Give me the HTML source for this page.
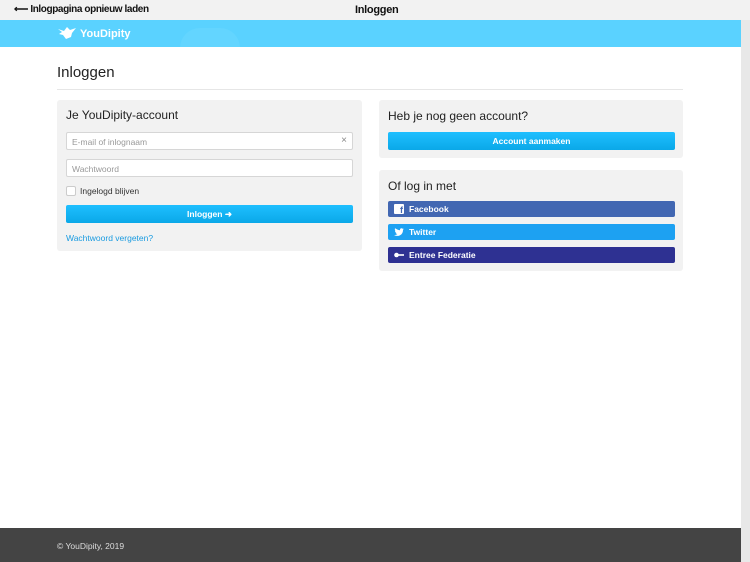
<!DOCTYPE html>
<html><head><style>
*{box-sizing:border-box;margin:0;padding:0}
body{width:750px;height:562px;overflow:hidden;background:#fff;font-family:"Liberation Sans",sans-serif;position:relative;color:#333}
.top{position:absolute;left:0;top:0;width:750px;height:20px;background:#f2f2f2;font-size:10px;font-weight:bold;color:#111}
.top .b{position:absolute;left:14px;top:4px;letter-spacing:-0.4px}
.top .t{position:absolute;left:355px;top:4px;font-size:11px;letter-spacing:-0.3px}
.hdr{position:absolute;left:0;top:20px;width:741px;height:27px;background:#5ad2ff;overflow:hidden}
.cloud{position:absolute;left:180px;top:8px;width:60px;height:40px;border-radius:30px;background:#63d5ff}
.logo{position:absolute;left:80px;top:8px;color:#fff;font-weight:bold;font-size:11px}
.sb{position:absolute;left:741px;top:20px;width:9px;height:542px;background:#e8e8e8}
h1{position:absolute;left:57px;top:64px;font-size:15px;font-weight:normal;color:#222}
.hr{position:absolute;left:57px;top:89px;width:626px;height:1px;background:#e6e6e6}
.p{position:absolute;background:#f2f2f2;border-radius:3px}
h2{position:absolute;font-size:12px;font-weight:normal;color:#222}
.in{position:absolute;left:9px;width:287px;height:18px;background:#fff;border:1px solid #d6d6d6;border-radius:2px;font-size:8.5px;color:#999;padding:4px 5px}
.btn{position:absolute;left:9px;width:287px;height:18px;border-radius:2px;background:linear-gradient(#1fbfff,#0aa8e8);color:#fff;font-size:8.5px;font-weight:bold;text-align:center;line-height:18px}
.s{position:absolute;left:9px;width:287px;height:16px;border-radius:2px;color:#fff;font-size:8.5px;font-weight:bold;line-height:16px;padding-left:21px}
.ft{position:absolute;left:0;top:528px;width:741px;height:34px;background:#444;color:#ddd;font-size:8.5px}
</style></head><body>
<div class="top"><span class="b">⟵ Inlogpagina opnieuw laden</span><span class="t">Inloggen</span></div>
<div class="hdr"><div class="cloud"></div>
<svg style="position:absolute;left:57px;top:6px" width="20" height="14" viewBox="0 0 20 14"><path d="M1 3 L7 5 L10 1 L13 4 L19 2 L15 7 L14 11 L9 13 L6 9 L2 8 L5 6Z" fill="#fff"/></svg>
<span class="logo">YouDipity</span></div>
<div class="sb"></div>
<h1>Inloggen</h1><div class="hr"></div>
<div class="p" style="left:57px;top:100px;width:305px;height:151px">
<h2 style="left:9px;top:8px">Je YouDipity-account</h2>
<div class="in" style="top:32px">E-mail of inlognaam<span style="position:absolute;right:5px;top:2px;color:#888;font-size:10px">×</span></div>
<div class="in" style="top:59px">Wachtwoord</div>
<div style="position:absolute;left:9px;top:86px;width:10px;height:10px;background:#fff;border:1px solid #ccc;border-radius:2px"></div>
<span style="position:absolute;left:23px;top:86px;font-size:8.5px;color:#333">Ingelogd blijven</span>
<div class="btn" style="top:105px">Inloggen ➜</div>
<span style="position:absolute;left:9px;top:133px;font-size:8.5px;color:#1a9be0">Wachtwoord vergeten?</span>
</div>
<div class="p" style="left:379px;top:100px;width:304px;height:58px">
<h2 style="left:9px;top:9px">Heb je nog geen account?</h2>
<div class="btn" style="top:32px">Account aanmaken</div>
</div>
<div class="p" style="left:379px;top:170px;width:304px;height:101px">
<h2 style="left:9px;top:9px">Of log in met</h2>
<div class="s" style="top:31px;background:#4267b2"><span style="position:absolute;left:6px;top:3px;width:10px;height:10px;background:#fff;border-radius:1px;color:#4267b2;font-size:9px;line-height:12px;text-align:right;padding-right:1px">f</span>Facebook</div>
<div class="s" style="top:54px;background:#1da1f2"><svg style="position:absolute;left:6px;top:4px" width="10" height="8" viewBox="0 0 10 8"><path d="M10 1 L8.8 1.3 L9.6 0.3 L8.4 0.7 C7.6-.2 5.8 0.3 6 2.2 C4 2.1 2.4 1.2 1.1.3 C.5 1.4 1 2.5 1.6 3 L1 2.9 C1 3.9 1.7 4.5 2.4 4.7 L1.6 4.8 C1.9 5.5 2.6 6 3.4 6 C2.5 6.8 1.2 7.1 0 7 C4.5 9.5 9.2 6.6 9 1.8Z" fill="#fff"/></svg>Twitter</div>
<div class="s" style="top:77px;background:#2e3192"><svg style="position:absolute;left:6px;top:5px" width="10" height="6" viewBox="0 0 10 6"><circle cx="2.5" cy="3" r="2.3" fill="#fff"/><rect x="4" y="2.2" width="6" height="1.6" fill="#fff"/></svg>Entree Federatie</div>
</div>
<div class="ft"><span style="position:absolute;left:57px;top:13px">© YouDipity, 2019</span></div>
</body></html>
